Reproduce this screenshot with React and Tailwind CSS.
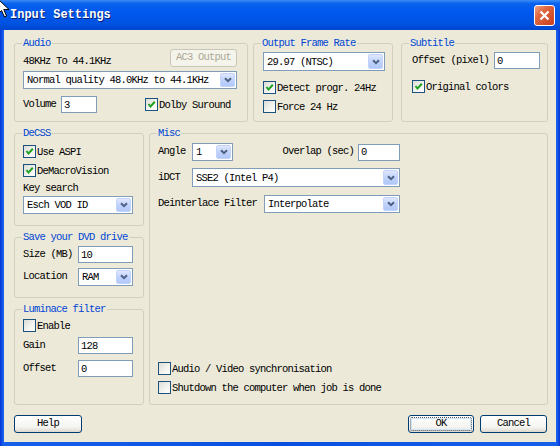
import React from "react";

function Group({ title, className, children }) {
  return (
    <div className={`relative border border-[#d0d0bf] rounded-[3px] flex flex-col ${className}`}>
      <span className="absolute -top-[7px] left-[7px] px-[1px] bg-[#ece9d8] text-[#0046d5] leading-[12px]">
        {title}
      </span>
      {children}
    </div>
  );
}

function Check({ checked, label, className = "" }) {
  return (
    <div className={`flex items-center h-[13px] ${className}`}>
      <span className="w-[13px] h-[13px] shrink-0 border border-[#1c5180] bg-[linear-gradient(135deg,#dcdcd7,#f4f4f0_60%,#ffffff)] flex items-center justify-center">
        {checked && (
          <svg width="9" height="9" viewBox="0 0 9 9">
            <path d="M1.5 4 L3.5 6.5 L7.8 1.8" stroke="#21a121" strokeWidth="2" fill="none" />
          </svg>
        )}
      </span>
      <span className="ml-[1px] leading-[12px] whitespace-nowrap">{label}</span>
    </div>
  );
}

function Select({ value, className }) {
  return (
    <div className={`flex items-center border border-[#7f9db9] bg-white pl-[3px] pr-[1px] ${className}`}>
      <span className="flex-1 whitespace-nowrap overflow-hidden leading-[12px]">{value}</span>
      <span className="w-[15px] self-stretch my-[1px] rounded-[2px] border border-[#c3d3fd] bg-[linear-gradient(to_bottom,#dfe8fe,#c1d3fb_50%,#b1c8f8)] flex items-center justify-center">
        <svg width="8" height="6" viewBox="0 0 8 6">
          <path d="M1 1.2 L4 4.2 L7 1.2" stroke="#4d6185" strokeWidth="2" fill="none" />
        </svg>
      </span>
    </div>
  );
}

function Input({ value, className }) {
  return (
    <div className={`flex items-center border border-[#7f9db9] bg-white pl-[2px] leading-[12px] ${className}`}>
      {value}
    </div>
  );
}

function Btn({ children, className, focus }) {
  return (
    <div
      className={`flex items-center justify-center border border-[#003c74] rounded-[3px] bg-[linear-gradient(to_bottom,#ffffff,#f4f4f0_70%,#dcd8cc)] p-[1px] ${className}`}
    >
      <div
        className={`flex-1 self-stretch flex items-center justify-center rounded-[2px] ${
          focus ? "border border-dotted border-[#555] shadow-[inset_0_0_0_1px_#cee7ff]" : ""
        }`}
      >
        {children}
      </div>
    </div>
  );
}

export default function App() {
  return (
    <div className="relative w-[560px] h-[446px] flex flex-col bg-[linear-gradient(to_right,#0831d9,#1660ea_3px,#0a4fe0_50%,#1660ea_calc(100%-3px),#0831d9)] font-['Liberation_Mono',monospace] text-[10.5px] tracking-[-0.8px] text-black overflow-hidden">
      {/* title bar */}
      <div className="h-[30px] shrink-0 flex items-center justify-between pl-[10px] pr-[5px] bg-[linear-gradient(to_bottom,#3d8cf7,#0a62ee_12%,#0058ee_40%,#0054e3_75%,#0046cf)]">
        <span className="text-white font-bold text-[12px] tracking-[0px] [text-shadow:1px_1px_0_#0a1f75]">
          Input Settings
        </span>
        <div className="w-[21px] h-[21px] rounded-[3px] border border-white bg-[linear-gradient(135deg,#f0a385,#e0673f_35%,#c83e1c)] flex items-center justify-center">
          <svg width="11" height="11" viewBox="0 0 11 11">
            <path d="M1.5 1.5 L9.5 9.5 M9.5 1.5 L1.5 9.5" stroke="white" strokeWidth="2.2" />
          </svg>
        </div>
      </div>

      {/* body */}
      <div className="flex-1 mx-[4px] mb-[4px] bg-[#ece9d8] pl-[10px] pr-[8px] pt-[13px] flex flex-col">
        {/* top row */}
        <div className="flex h-[79px]">
          <Group title="Audio" className="w-[234px] pl-[8px] pr-[10px] pt-[5px]">
            <div className="flex items-start justify-between h-[18px]">
              <span className="pt-[6px] leading-[12px]">48KHz To 44.1KHz</span>
              <div className="w-[67px] h-[18px] border border-[#c9c7ba] rounded-[3px] bg-[#f5f4ea] text-[#aca899] flex items-center justify-center">
                AC3 Output
              </div>
            </div>
            <Select value="Normal quality 48.0KHz to 44.1KHz" className="mt-[4px] h-[18px]" />
            <div className="mt-[7px] flex items-center h-[17px]">
              <span className="w-[38px]">Volume</span>
              <Input value="3" className="w-[36px] h-[17px]" />
              <Check checked label="Dolby Suround" className="ml-[48px]" />
            </div>
          </Group>

          <Group title="Output Frame Rate" className="ml-[5px] w-[140px] pl-[9px] pt-[8px]">
            <Select value="29.97 (NTSC)" className="w-[122px] h-[19px]" />
            <Check checked label="Detect progr. 24Hz" className="mt-[10px]" />
            <Check label="Force 24 Hz" className="mt-[6px]" />
          </Group>

          <Group title="Subtitle" className="ml-[8px] w-[147px] pl-[10px] pt-[8px]">
            <div className="flex items-center h-[17px]">
              <span className="w-[82px] whitespace-nowrap">Offset (pixel)</span>
              <Input value="0" className="w-[46px] h-[17px]" />
            </div>
            <Check checked label="Original colors" className="mt-[11px]" />
          </Group>
        </div>

        {/* middle section */}
        <div className="mt-[11px] flex h-[272px]">
          <div className="w-[130px] flex flex-col">
            <Group title="DeCSS" className="h-[93px] pl-[8px] pt-[11px]">
              <Check checked label="Use ASPI" />
              <Check checked label="DeMacroVision" className="mt-[6px]" />
              <span className="mt-[5px] h-[12px] leading-[12px]">Key search</span>
              <Select value="Esch VOD ID" className="mt-[2px] w-[110px] h-[18px]" />
            </Group>

            <Group title="Save your DVD drive" className="mt-[11px] h-[61px] pl-[8px] pt-[8px]">
              <div className="flex items-center h-[17px]">
                <span className="w-[55px]">Size (MB)</span>
                <Input value="10" className="w-[55px] h-[17px]" />
              </div>
              <div className="mt-[5px] flex items-center h-[18px]">
                <span className="w-[55px]">Location</span>
                <Select value="RAM" className="w-[55px] h-[18px]" />
              </div>
            </Group>

            <Group title="Luminace filter" className="mt-[11px] h-[96px] pl-[8px] pt-[9px]">
              <Check label="Enable" />
              <div className="mt-[5px] flex items-center h-[17px]">
                <span className="w-[55px]">Gain</span>
                <Input value="128" className="w-[55px] h-[17px]" />
              </div>
              <div className="mt-[6px] flex items-center h-[17px]">
                <span className="w-[55px]">Offset</span>
                <Input value="0" className="w-[55px] h-[17px]" />
              </div>
            </Group>
          </div>

          <Group title="Misc" className="ml-[5px] w-[399px] pl-[8px] pt-[9px] pb-[10px]">
            <div className="flex items-center h-[18px] w-[242px]">
              <span className="w-[34px]">Angle</span>
              <Select value="1" className="w-[41px] h-[18px]" />
              <span className="ml-auto mr-[4px] whitespace-nowrap">Overlap (sec)</span>
              <Input value="0" className="w-[42px] h-[17px]" />
            </div>
            <div className="mt-[7px] flex items-center h-[19px]">
              <span className="w-[34px]">iDCT</span>
              <Select value="SSE2 (Intel P4)" className="w-[208px] h-[19px]" />
            </div>
            <div className="mt-[8px] flex items-center h-[18px]">
              <span className="w-[106px] whitespace-nowrap">Deinterlace Filter</span>
              <Select value="Interpolate" className="w-[136px] h-[18px]" />
            </div>
            <Check label="Audio / Video synchronisation" className="mt-auto" />
            <Check label="Shutdown the computer when job is done" className="mt-[6px]" />
          </Group>
        </div>

        {/* buttons */}
        <div className="mt-[10px] flex justify-between h-[18px] pr-[1px]">
          <Btn className="w-[68px] h-[18px]">Help</Btn>
          <div className="flex gap-[6px]">
            <Btn focus className="w-[66px] h-[18px]">OK</Btn>
            <Btn className="w-[67px] h-[18px]">Cancel</Btn>
          </div>
        </div>
      </div>

      {/* mouse cursor */}
      <svg className="absolute -left-[3px] -top-[2px]" width="13" height="21" viewBox="0 0 13 21">
        <path d="M0.5 0.5 L0.5 16.5 L4.5 12.5 L7.5 19 L9.5 18 L6.8 11.5 L12 11.5 Z" fill="white" stroke="black" strokeWidth="1" />
      </svg>
    </div>
  );
}
